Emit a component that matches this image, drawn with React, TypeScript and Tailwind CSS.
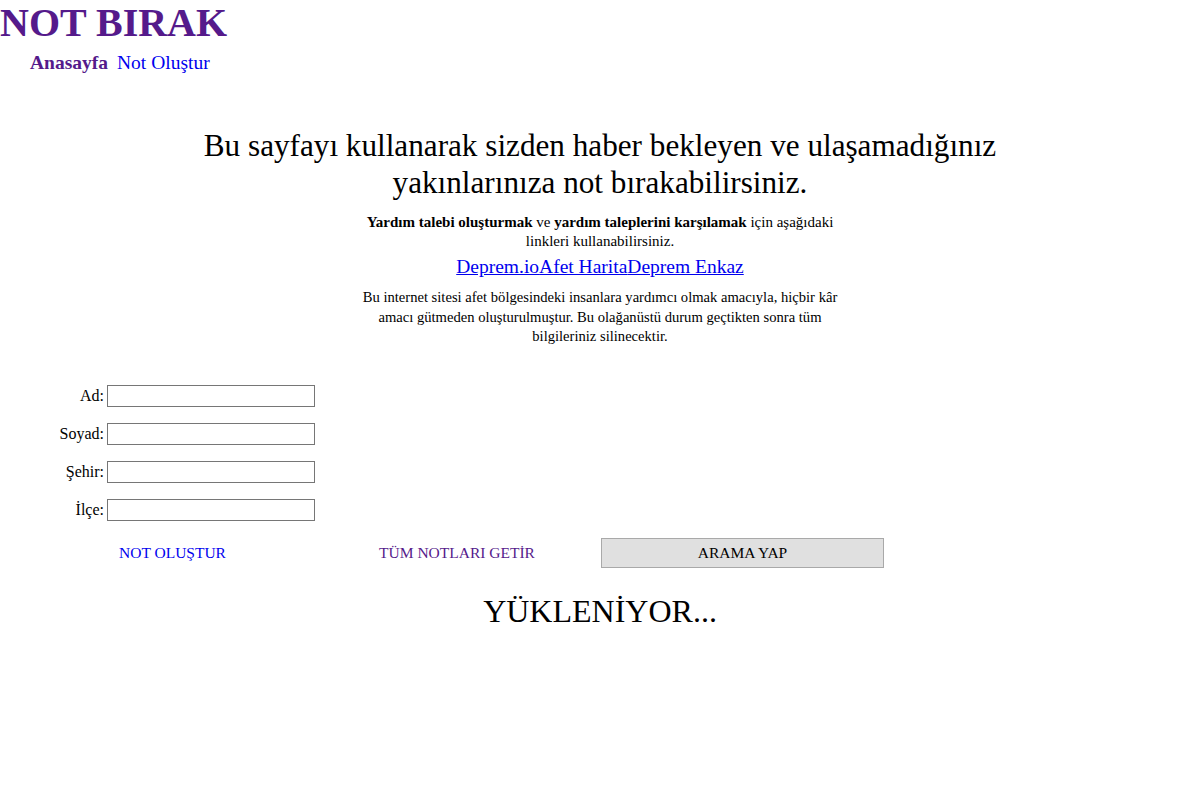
import React from "react";

const serif = { fontFamily: '"Liberation Serif", "Times New Roman", serif' };

export default function App() {
  const fields = ["Ad", "Soyad", "Şehir", "İlçe"];
  return (
    <div className="w-[1200px] h-[800px] bg-white text-black font-['Liberation_Serif',serif]" style={serif}>
      <h1 className="text-[40px] leading-[46px] font-bold text-[#551a8b] m-0">NOT BIRAK</h1>
      <nav className="flex gap-[9px] pl-[30px] mt-[5px] text-[19.5px] leading-[24px]">
        <span className="font-bold text-[#551a8b]">Anasayfa</span>
        <span className="text-[#0000ee]">Not Oluştur</span>
      </nav>
      <div className="flex flex-col items-center mt-[52px]">
        <h2 className="text-[31.2px] leading-[37px] text-center w-[820px]">
          Bu sayfayı kullanarak sizden haber bekleyen ve ulaşamadığınız yakınlarınıza not bırakabilirsiniz.
        </h2>
        <p className="text-[15px] leading-[19px] text-center w-[480px] mt-[12px]">
          <b>Yardım talebi oluşturmak</b> ve <b>yardım taleplerini karşılamak</b> için aşağıdaki linkleri kullanabilirsiniz.
        </p>
        <div className="text-[19.5px] leading-[24px] mt-[4px] text-[#0000ee] underline">
          <span>Deprem.io</span><span>Afet Harita</span><span>Deprem Enkaz</span>
        </div>
        <p className="text-[14.6px] leading-[19.5px] text-center w-[490px] mt-[9px]">
          Bu internet sitesi afet bölgesindeki insanlara yardımcı olmak amacıyla, hiçbir kâr amacı gütmeden oluşturulmuştur. Bu olağanüstü durum geçtikten sonra tüm bilgileriniz silinecektir.
        </p>
      </div>
      <div className="flex flex-col gap-[16px] mt-[38px]">
        {fields.map((f) => (
          <div key={f} className="flex items-center">
            <label className="w-[104px] text-right text-[16px] leading-[22px]">{f}:</label>
            <div className="ml-[3px] w-[208px] h-[22px] border border-[#767676] bg-white"></div>
          </div>
        ))}
      </div>
      <div className="flex items-center mt-[17px] text-[15.5px]">
        <div className="w-[345px] text-center text-[#0000ee]">NOT OLUŞTUR</div>
        <div className="w-[224px] text-center text-[#551a8b]">TÜM NOTLARI GETİR</div>
        <div className="ml-[32px] w-[283px] h-[30px] bg-[#e0e0e0] border border-[#a9a9a9] flex items-center justify-center">ARAMA YAP</div>
      </div>
      <div className="text-center text-[32px] leading-[37px] mt-[25px]">YÜKLENİYOR...</div>
    </div>
  );
}
